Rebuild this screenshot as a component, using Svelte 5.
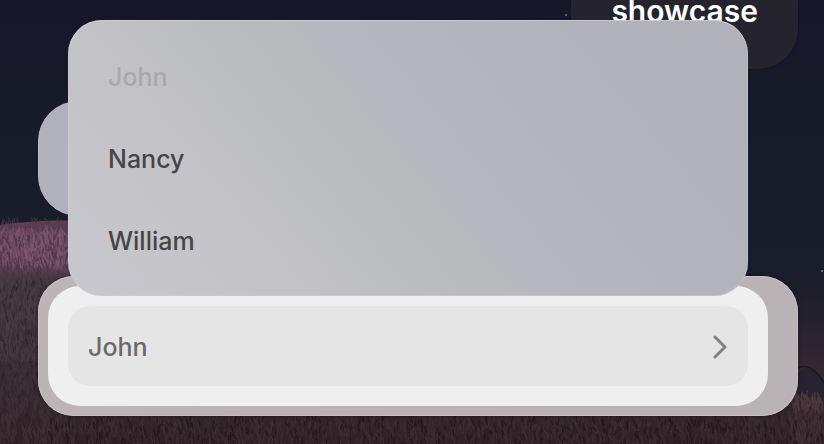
<script lang="ts">
  type Option = {
    value: string;
    disabled?: boolean;
  };

  const options: Option[] = [
    { value: 'John', disabled: true },
    { value: 'Nancy' },
    { value: 'William' },
  ];

  let selected = $state('John');
  let open = $state(true);

  function choose(value: string) {
    selected = value;
    open = false;
  }

  // small seeded generator, keeps the meadow the same on every load
  let seed = 11;
  function random() {
    seed = (seed * 16807) % 2147483647;
    return seed / 2147483647;
  }

  function blades(count: number, x: number, y: number, width: number, height: number, length: number) {
    let d = '';
    for (let i = 0; i < count; i++) {
      const left = x + random() * width;
      const top = y + random() * height;
      const lean = (random() - 0.6) * length * 0.7;
      const size = length * (0.5 + random() * 0.6);
      d += `M${left.toFixed(1)} ${top.toFixed(1)}q${(lean * 0.2).toFixed(1)} ${(-size * 0.6).toFixed(1)} ${lean.toFixed(1)} ${(-size).toFixed(1)}`;
    }
    return d;
  }

  const meadow = [
    { color: '#54384a', d: blades(110, 0, 228, 90, 6, 11) },
    { color: '#765069', d: blades(420, 0, 234, 90, 36, 9) },
    { color: '#875c75', d: blades(160, 0, 234, 90, 34, 7) },
    { color: '#452e3f', d: blades(170, 0, 238, 90, 42, 6) },
    { color: '#4b4047', d: blades(420, 0, 284, 70, 80, 9) },
    { color: '#281f25', d: blades(190, 0, 284, 70, 164, 6) },
    { color: '#42343a', d: blades(420, 0, 350, 70, 100, 9) },
    { color: '#422f35', d: blades(1200, 50, 420, 774, 34, 9) },
    { color: '#1f1216', d: blades(620, 50, 420, 774, 34, 6) },
    { color: '#574048', d: blades(60, 790, 400, 34, 14, 9) },
    { color: '#46343a', d: blades(110, 790, 408, 34, 40, 8) },
  ];
</script>

<main class="chat">
  <svg class="scene" viewBox="0 0 824 444" preserveAspectRatio="xMidYMax slice" aria-hidden="true">
    <defs>
      <linearGradient id="sky" x1="0" y1="0" x2="0" y2="1">
        <stop offset="0" stop-color="#171629" />
        <stop offset="0.2" stop-color="#171a29" />
        <stop offset="0.62" stop-color="#1a1d2b" />
        <stop offset="0.78" stop-color="#2c252e" />
        <stop offset="0.88" stop-color="#3a2c33" />
      </linearGradient>
      <linearGradient id="ground" x1="0" y1="0" x2="0" y2="1">
        <stop offset="0" stop-color="#614256" />
        <stop offset="0.2" stop-color="#614256" />
        <stop offset="0.27" stop-color="#40363e" />
        <stop offset="0.6" stop-color="#392d33" />
        <stop offset="1" stop-color="#302126" />
      </linearGradient>
    </defs>
    <rect width="824" height="444" fill="url(#sky)" />
    <circle cx="566" cy="15" r="1" fill="#777681" />
    <circle cx="822" cy="271" r="1" fill="#85818a" />
    <path d="M798 374Q805 364 814 370T830 389V398H798Z" fill="#282330" />
    <path d="M798 368Q812 361 826 386" fill="none" stroke="#1b1924" stroke-width="1.5" />
    <path d="M0 225Q40 219 90 221L620 360Q730 390 824 398V444H0Z" fill="url(#ground)" />
    {#each meadow as layer}
      <path d={layer.d} fill="none" stroke={layer.color} stroke-width="1.2" stroke-linecap="round" opacity="0.65" />
    {/each}
  </svg>

  <section class="thread" aria-label="Messages">
    <p class="bubble bubble--outgoing">showcase</p>
    <div class="bubble bubble--incoming"></div>
  </section>

  <section class="composer">
    <div class="field">
      <div class="select">
        <button
          type="button"
          class="select__trigger"
          aria-haspopup="listbox"
          aria-expanded={open}
          aria-controls="names"
          onclick={() => (open = !open)}
        >
          <span>{selected}</span>
          <svg class="select__chevron" viewBox="0 0 16 24" aria-hidden="true">
            <path d="M3 2L13 12L3 22" />
          </svg>
        </button>

        {#if open}
          <div class="menu" id="names" role="listbox" aria-label="Name">
            {#each options as option}
              <button
                type="button"
                class="menu__option"
                role="option"
                aria-selected={option.value === selected}
                disabled={option.disabled}
                onclick={() => choose(option.value)}
              >
                {option.value}
              </button>
            {/each}
          </div>
        {/if}
      </div>
    </div>
  </section>
</main>

<style>
  :global(body) {
    background: #171a29;
  }

  .chat {
    position: relative;
    display: flex;
    flex-direction: column;
    gap: 60px;
    box-sizing: border-box;
    height: 100vh;
    padding: 0 26px 28px 38px;
    overflow: hidden;
    font-family: Inter, 'Liberation Sans', sans-serif;
    font-size: 25px;
    font-weight: 500;
    line-height: 32px;
  }

  .scene {
    position: absolute;
    inset: 0;
    width: 100%;
    height: 100%;
  }

  .thread {
    position: relative;
    display: flex;
    flex: 1;
    flex-direction: column;
    justify-content: flex-end;
    gap: 32px;
    min-height: 0;
  }

  .bubble {
    box-sizing: border-box;
    margin: 0;
    border-radius: 40px;
  }

  .bubble--outgoing {
    align-self: flex-end;
    padding: 40px;
    background: #25232d;
    box-shadow: 0 0 3px rgba(0, 0, 0, 0.3);
    color: #fff;
    font-size: 30px;
    font-weight: 600;
    line-height: 36px;
  }

  .bubble--incoming {
    flex: none;
    width: 40%;
    height: 115px;
    border: 1px solid #bcbbc6;
    background: #b1b1bd;
  }

  .composer {
    position: relative;
    padding: 10px 30px 10px 10px;
    border-radius: 36px;
    background: linear-gradient(90deg, #bcb4b5, #bdb1b3 50%, #b9b3b6);
    box-shadow:
      inset 0 0 0 1px #c6bec0,
      0 0 5px rgba(0, 0, 0, 0.35);
  }

  .field {
    padding: 20px;
    border-radius: 32px;
    background: #f0eff0;
  }

  .select {
    position: relative;
  }

  .select__trigger {
    display: flex;
    align-items: center;
    justify-content: space-between;
    width: 100%;
    padding: 25px 20px 23px;
    border: 0;
    border-radius: 22px;
    background: #e6e5e6;
    color: #6a696b;
    font: inherit;
    cursor: pointer;
  }

  .select__chevron {
    width: 16px;
    height: 24px;
    fill: none;
    stroke: #828184;
    stroke-width: 3;
    stroke-linecap: round;
    stroke-linejoin: round;
  }

  .menu {
    position: absolute;
    right: 0;
    bottom: calc(100% + 10px);
    left: 0;
    display: flex;
    flex-direction: column;
    box-sizing: border-box;
    padding: 16px 20px 14px;
    border-radius: 34px;
    background: linear-gradient(
      50deg,
      #c8c7cd 0%,
      #c3c3c7 25%,
      #bbbcbf 40%,
      #b8babd 48%,
      #b6b7c0 55%,
      #b2b2bb 80%,
      #b1b1ba 100%
    );
    box-shadow:
      inset 0 1px 1px rgba(211, 203, 218, 0.7),
      inset 0 0 0 1px rgba(211, 207, 218, 0.4);
  }

  .menu__option {
    padding: 25px 20px;
    border: 0;
    border-radius: 16px;
    background: transparent;
    color: #454548;
    font: inherit;
    text-align: left;
    cursor: pointer;
  }

  .menu__option:disabled {
    color: #a9a9ad;
    cursor: default;
  }
</style>
